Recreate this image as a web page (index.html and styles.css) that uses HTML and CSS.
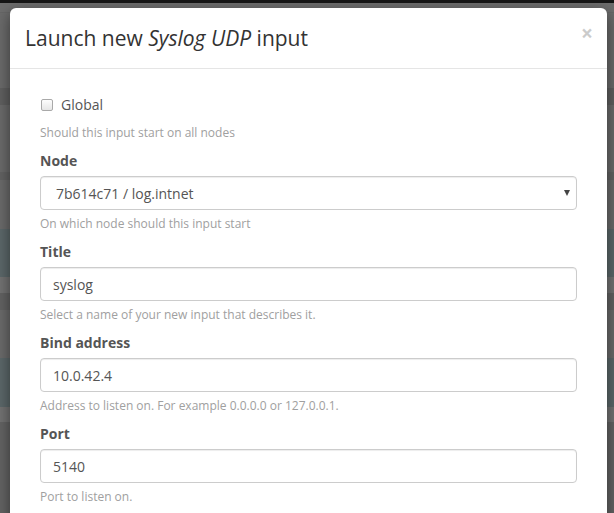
FILE: index.html
```html
<!DOCTYPE html>
<html>
<head>
<meta charset="utf-8">
<link rel="stylesheet" href="styles.css">
</head>
<body>
<div class="page">
  <div class="band b-black"></div>
  <div class="band b-top"></div>
  <div class="band b-gray" style="height:75px"></div>
  <div class="band b-dark" style="height:17px"></div>
  <div class="band b-gray" style="height:67px"></div>
  <div class="band b-dark2" style="height:8px"></div>
  <div class="band b-gray" style="height:49px"></div>
  <div class="band b-blue" style="height:48px"></div>
  <div class="band b-light" style="height:16px"></div>
  <div class="band b-dark2" style="height:17px"></div>
  <div class="band b-gray" style="height:48px"></div>
  <div class="band b-blue" style="height:49px"></div>
  <div class="band b-light" style="height:15px"></div>
  <div class="band b-bottom" style="height:91px"></div>
</div>

<div class="modal">
  <div class="modal-header">
    <h4 class="modal-title">Launch new <em>Syslog UDP</em> input</h4>
    <button class="close" type="button">&times;</button>
  </div>
  <div class="modal-body">
    <div class="group group-check">
      <label class="check"><input type="checkbox" class="cb"> Global</label>
      <p class="help">Should this input start on all nodes</p>
    </div>
    <div class="group">
      <label class="label">Node</label>
      <div class="select-wrap">
        <select class="control select">
          <option>7b614c71 / log.intnet</option>
        </select>
      </div>
      <p class="help">On which node should this input start</p>
    </div>
    <div class="group">
      <label class="label">Title</label>
      <input class="control" type="text" value="syslog">
      <p class="help">Select a name of your new input that describes it.</p>
    </div>
    <div class="group">
      <label class="label">Bind address</label>
      <input class="control" type="text" value="10.0.42.4">
      <p class="help">Address to listen on. For example 0.0.0.0 or 127.0.0.1.</p>
    </div>
    <div class="group">
      <label class="label">Port</label>
      <input class="control" type="text" value="5140">
      <p class="help">Port to listen on.</p>
    </div>
  </div>
</div>
</body>
</html>
```
FILE: styles.css
```css
* { box-sizing: border-box; }
html, body { margin: 0; padding: 0; }
body {
  width: 614px;
  height: 513px;
  overflow: hidden;
  font-family: "Open Sans", "DejaVu Sans", sans-serif;
  font-size: 14px;
  color: #555;
  position: relative;
  background: #6b6b6b;
}
.page { display: flex; flex-direction: column; }
.band { width: 100%; }
.b-black { height: 3px; background: #161616; }
.b-top { height: 10px; background: #6d6d6d; border-bottom: 1px solid #666; }
.b-gray { background: #6b6b6b; }
.b-dark { background: #606060; }
.b-dark2 { background: #636363; }
.b-blue { background: #5c686a; }
.b-light { background: #737373; }
.b-bottom { background: #646464; }

.modal {
  position: absolute;
  left: 10px;
  top: 8px;
  width: 597px;
  height: 540px;
  background: #fff;
  border-radius: 6px;
  box-shadow: 0 5px 15px rgba(0,0,0,.5);
}
.modal-header {
  height: 61px;
  padding: 15px;
  border-bottom: 1px solid #e5e5e5;
  display: flex;
  justify-content: space-between;
  align-items: flex-start;
}
.modal-title {
  margin: 0;
  font-size: 21px;
  font-weight: 400;
  line-height: 30px;
  color: #333;
}
.modal-title em { font-style: italic; }
.close {
  border: 0;
  background: none;
  padding: 0;
  margin-top: 0;
  margin-right: -1px;
  font-family: "Open Sans", sans-serif;
  font-size: 21px;
  font-weight: 700;
  line-height: 1;
  color: #000;
  opacity: .2;
}
.modal-body {
  padding: 26px 30px 15px;
}
.group { display: flex; flex-direction: column; margin-bottom: 10px; }
.check {
  display: flex;
  align-items: center;
  height: 20px;
  line-height: 20px;
  color: #555;
  font-size: 14px;
}
.cb {
  appearance: none;
  -webkit-appearance: none;
  width: 12px;
  height: 12px;
  margin: 0 8px 0 1px;
  border: 1px solid #a9a9a9;
  border-radius: 2px;
  background: linear-gradient(#fdfdfd, #e6e6e6);
}
.help {
  margin: 5px 0 0;
  font-size: 12px;
  line-height: 17px;
  color: #a0a0a0;
}
.group-check .help { margin-top: 9px; }
.label {
  font-weight: 700;
  font-size: 14px;
  line-height: 20px;
  color: #555;
  margin-bottom: 5px;
}
.control {
  display: block;
  width: 100%;
  height: 34px;
  padding: 6px 12px;
  font-family: "Open Sans", sans-serif;
  font-size: 14px;
  color: #555;
  background: #fff;
  border: 1px solid #ccc;
  border-radius: 4px;
  box-shadow: inset 0 1px 1px rgba(0,0,0,.075);
  outline: none;
}
.select-wrap { position: relative; }
.select {
  appearance: none;
  -webkit-appearance: none;
  padding-left: 15px;
}
.select-wrap::after {
  content: "";
  position: absolute;
  right: 7px;
  top: 14px;
  border-left: 3px solid transparent;
  border-right: 3px solid transparent;
  border-top: 6px solid #444;
  pointer-events: none;
}
```
